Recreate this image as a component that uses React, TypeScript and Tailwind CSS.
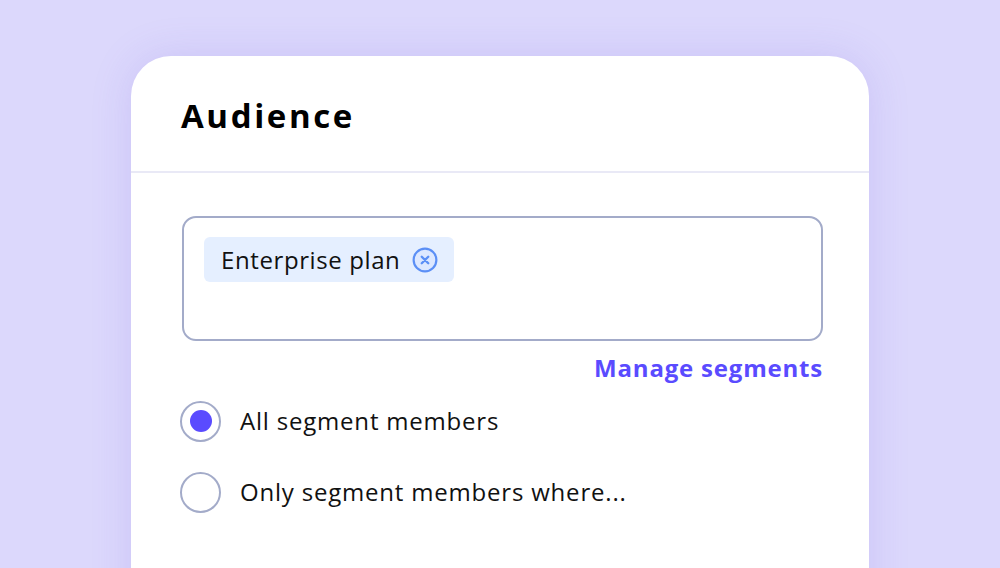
import { useState } from "react";

const body = { fontFamily: "'Open Sans', 'Noto Sans', sans-serif" };
const heading = { fontFamily: "'Open Sans', Inter, sans-serif" };

function Radio({ checked, label, onClick }: { checked: boolean; label: string; onClick: () => void }) {
  return (
    <button type="button" onClick={onClick} className="flex h-[42px] items-center gap-[19px] text-left">
      <span className="flex h-[41px] w-[41px] shrink-0 items-center justify-center rounded-full border-2 border-[#a3abc9] bg-white">
        {checked && <span className="h-[22px] w-[22px] rounded-full bg-[#5a4bff]" />}
      </span>
      <span className="text-[24px] tracking-[0.8px] text-[#111]">{label}</span>
    </button>
  );
}

export default function App() {
  const [choice, setChoice] = useState(0);
  const [tags, setTags] = useState(["Enterprise plan"]);

  return (
    <div className="h-[568px] w-full overflow-hidden bg-[#dcd8fc] pt-14" style={body}>
      <div className="mx-auto h-[600px] w-[738px] rounded-[40px] bg-white shadow-[0_0_40px_rgba(120,100,220,0.18)]">
        <div className="flex h-[115px] items-center px-[50px] pt-[4px]">
          <h1 className="text-[33px] font-bold tracking-[2.6px] text-black" style={heading}>
            Audience
          </h1>
        </div>
        <div className="h-[2px] bg-[#e9e9f6]" />
        <div className="pl-[51px] pr-[46px] pt-[43px]">
          <div className="h-[125px] rounded-[14px] border-2 border-[#a3abc9] px-[20px] pt-[19px]">
            <div className="flex gap-2">
              {tags.map((t) => (
                <span key={t} className="flex h-[45px] items-center gap-[12px] rounded-[6px] bg-[#e5efff] pl-[17px] pr-[16px]">
                  <span className="text-[24px] tracking-[0.6px] text-[#111]">{t}</span>
                  <button
                    type="button"
                    onClick={() => setTags(tags.filter((x) => x !== t))}
                    className="flex h-[26px] w-[26px] items-center justify-center"
                  >
                    <svg width="26" height="26" viewBox="0 0 24 24" fill="none">
                      <circle cx="12" cy="12" r="10.5" stroke="#5b8ff6" strokeWidth="2" fill="#dde8ff" />
                      <path d="M9 9l6 6M15 9l-6 6" stroke="#5b8ff6" strokeWidth="2.2" strokeLinecap="round" />
                    </svg>
                  </button>
                </span>
              ))}
            </div>
          </div>
          <div className="mt-[9px] flex justify-end">
            <a href="#" className="text-[24px] font-bold tracking-[0.8px] text-[#5a4bff]">
              Manage segments
            </a>
          </div>
          <div className="-ml-[2px] mt-[14px] flex flex-col gap-[29px]">
            <Radio checked={choice === 0} label="All segment members" onClick={() => setChoice(0)} />
            <Radio checked={choice === 1} label="Only segment members where..." onClick={() => setChoice(1)} />
          </div>
        </div>
      </div>
    </div>
  );
}
